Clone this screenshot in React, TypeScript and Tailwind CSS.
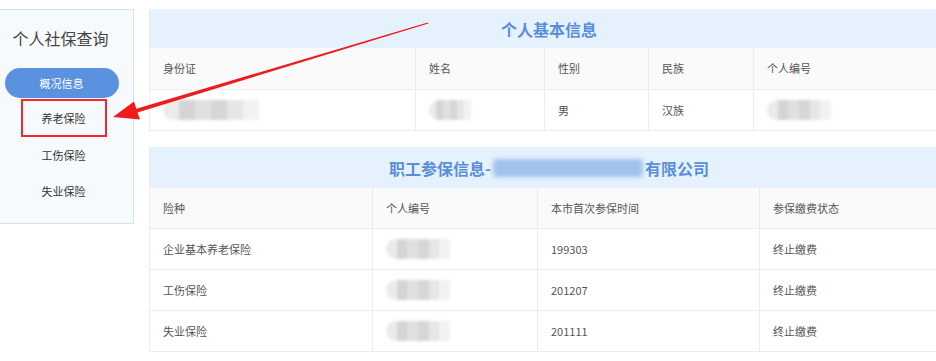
import * as React from "react"

const font = { fontFamily: '"Noto Sans CJK SC", "Microsoft YaHei", sans-serif' }

function Blur({ w }: { w: string }) {
  return (
    <div className={`${w} h-[20px] flex overflow-hidden rounded-l-full blur-[1.5px]`}>
      <div className="flex-1 bg-[#ebebeb]" />
      <div className="flex-1 bg-[#d4d4d4]" />
      <div className="flex-1 bg-[#e0e0e0]" />
      <div className="flex-1 bg-[#d6d6d6]" />
      <div className="flex-1 bg-[#e6e6e6]" />
      <div className="flex-1 bg-[#f2f2f2]" />
    </div>
  )
}

function Cell({ children, last, tall }: { children: React.ReactNode; last?: boolean; tall?: boolean }) {
  return (
    <div
      className={`${tall ? "h-[41px]" : "h-[40px]"} flex items-center pl-[13px] ${
        last ? "" : "border-r border-[#ececec]"
      }`}
    >
      {children}
    </div>
  )
}

export default function App() {
  const rows2 = [
    ["企业基本养老保险", "199303", "终止缴费"],
    ["工伤保险", "201207", "终止缴费"],
    ["失业保险", "201111", "终止缴费"],
  ]

  return (
    <div className="relative w-[936px] h-[361px] overflow-hidden bg-white text-[11px] text-[#555]" style={font}>
      <div className="flex">
        {/* Sidebar */}
        <div className="mt-[9px] w-[134px] h-[215px] shrink-0 bg-[#f7fafd] border border-[#d5e3f1] border-l-0 flex flex-col items-center">
          <div className="mt-[20px] text-[16px] text-[#444] leading-none -ml-[12px]">个人社保查询</div>
          <div className="mt-[22px] w-[114px] h-[30px] rounded-full bg-[#5b92e0] text-white flex items-center justify-center -ml-[10px]">
            概况信息
          </div>
          <div className="mt-[1px] h-[38px] w-[86px] flex items-center justify-center text-[#333] -ml-[6px] border-2 border-[#ee2a2a]">
            养老保险
          </div>
          <div className="h-[36px] flex items-center justify-center text-[#333] -ml-[6px]">工伤保险</div>
          <div className="h-[36px] flex items-center justify-center text-[#333] -ml-[6px]">失业保险</div>
        </div>

        {/* Main */}
        <div className="ml-[15px] w-[800px] shrink-0 flex flex-col">
          <div className="mt-[9px] border-x border-[#ececec]">
            <div className="h-[39px] bg-[#e5f2fd] flex items-center justify-center text-[16px] font-bold text-[#5a8ed9]">
              个人基本信息
            </div>
            <div className="grid grid-cols-[266px_129px_104px_105px_1fr] bg-[#fafafa] border-b border-[#ececec]">
              <Cell tall>身份证</Cell>
              <Cell tall>姓名</Cell>
              <Cell tall>性别</Cell>
              <Cell tall>民族</Cell>
              <Cell tall last>个人编号</Cell>
            </div>
            <div className="grid grid-cols-[266px_129px_104px_105px_1fr] bg-white border-b border-[#ececec]">
              <Cell><Blur w="w-[96px]" /></Cell>
              <Cell><Blur w="w-[42px]" /></Cell>
              <Cell>男</Cell>
              <Cell>汉族</Cell>
              <Cell last><Blur w="w-[64px]" /></Cell>
            </div>
          </div>

          <div className="mt-[16px] border-x border-[#ececec]">
            <div className="h-[41px] bg-[#e5f2fd] flex items-center justify-center text-[16px] font-bold text-[#5a8ed9]">
              <span>职工参保信息-</span>
              <span className="w-[150px] h-[18px] mx-[2px] rounded-sm bg-[#a3c2ec] blur-[2px]" />
              <span>有限公司</span>
            </div>
            <div className="grid grid-cols-[223px_165px_222px_1fr] bg-[#fafafa] border-b border-[#ececec]">
              <Cell>险种</Cell>
              <Cell>个人编号</Cell>
              <Cell>本市首次参保时间</Cell>
              <Cell last>参保缴费状态</Cell>
            </div>
            {rows2.map((r) => (
              <div key={r[0]} className="grid grid-cols-[223px_165px_222px_1fr] bg-white border-b border-[#ececec]">
                <Cell>{r[0]}</Cell>
                <Cell><Blur w="w-[64px]" /></Cell>
                <Cell>{r[1]}</Cell>
                <Cell last>{r[2]}</Cell>
              </div>
            ))}
          </div>
        </div>
      </div>

      {/* Red annotation arrow */}
      <svg className="absolute left-0 top-0 pointer-events-none" width="936" height="361">
        <polygon
          points="113,117 140,119.5 137.5,112.6 428.3,23.4 427.8,22.4 136.3,108.8 134,101.5"
          fill="#ee1c1c"
        />
      </svg>
    </div>
  )
}
